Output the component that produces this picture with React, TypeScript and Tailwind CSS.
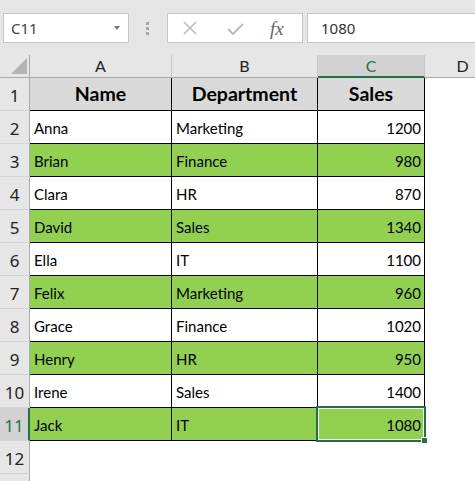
import React from 'react';

type Row = { name: string; dept: string; sales: number };

const rows: Row[] = [
  { name: 'Anna', dept: 'Marketing', sales: 1200 },
  { name: 'Brian', dept: 'Finance', sales: 980 },
  { name: 'Clara', dept: 'HR', sales: 870 },
  { name: 'David', dept: 'Sales', sales: 1340 },
  { name: 'Ella', dept: 'IT', sales: 1100 },
  { name: 'Felix', dept: 'Marketing', sales: 960 },
  { name: 'Grace', dept: 'Finance', sales: 1020 },
  { name: 'Henry', dept: 'HR', sales: 950 },
  { name: 'Irene', dept: 'Sales', sales: 1400 },
  { name: 'Jack', dept: 'IT', sales: 1080 },
];

const ui = { fontFamily: '"Noto Sans", "Open Sans", sans-serif' };
const cellFont = { fontFamily: 'Lato, "Noto Sans", sans-serif' };

function FormulaBar() {
  return (
    <div className="h-[55px] bg-[#e6e6e6] flex items-start pt-[13px]" style={ui}>
      <div className="ml-[3px] w-[126px] h-[30px] bg-white border border-[#c6c6c6] flex items-center pl-[7px] pr-[8px]">
        <span className="text-[15px] text-[#444] leading-none">C11</span>
        <span className="ml-auto w-0 h-0 border-l-[3.5px] border-r-[3.5px] border-t-[4px] border-l-transparent border-r-transparent border-t-[#777]" />
      </div>
      <div className="w-[38px] h-[30px] flex flex-col items-center justify-center gap-[2px] pr-[1px]">
        <span className="w-[3px] h-[3px] bg-[#a6a6a6]" />
        <span className="w-[3px] h-[3px] bg-[#a6a6a6]" />
        <span className="w-[3px] h-[3px] bg-[#a6a6a6]" />
      </div>
      <div className="w-[136px] h-[30px] bg-white border border-[#c6c6c6] flex items-center">
        <svg className="ml-[14px]" width="16" height="14" viewBox="0 0 16 14" fill="none">
          <path d="M2 1 L14 13 M14 1 L2 13" stroke="#bcbcbc" strokeWidth="1.6" />
        </svg>
        <svg className="ml-[29px] mt-[2px]" width="17" height="12" viewBox="0 0 17 12" fill="none">
          <path d="M1 6 L6 11 L16 1" stroke="#bcbcbc" strokeWidth="2" />
        </svg>
        <span
          className="ml-[26px] text-[19px] italic text-[#666] leading-none"
          style={{ fontFamily: '"Liberation Serif", serif' }}
        >
          fx
        </span>
      </div>
      <div className="ml-[4px] flex-1 h-[30px] bg-white border border-[#c6c6c6] border-r-0 flex items-center pl-[13px]">
        <span className="text-[15px] text-[#333] leading-none">1080</span>
      </div>
    </div>
  );
}

function ColHeader({ label, selected }: { label: string; selected?: boolean }) {
  return (
    <div
      className={
        'h-[23px] flex items-center justify-center text-[16px] border-r border-[#c8c8c8] ' +
        (selected
          ? 'bg-[#d2d2d2] text-[#217346] border-b-2 border-b-[#217346]'
          : 'bg-[#e6e6e6] text-[#222] border-b border-b-[#ababab]')
      }
      style={cellFont}
    >
      {label}
    </div>
  );
}

function RowHeader({ n, selected }: { n?: number; selected?: boolean }) {
  return (
    <div
      className={
        'h-[33px] flex items-end justify-center pb-[4px] text-[17px] leading-[20px] border-b border-[#d4d4d4] ' +
        (selected
          ? 'bg-[#d2d2d2] text-[#217346] border-r-2 border-r-[#217346]'
          : 'bg-[#e6e6e6] text-[#222] border-r border-r-[#ababab]')
      }
      style={ui}
    >
      {n}
    </div>
  );
}

function Cell({
  children,
  fill,
  right,
  bold,
  center,
  selected,
}: {
  children?: React.ReactNode;
  fill?: string;
  right?: boolean;
  bold?: boolean;
  center?: boolean;
  selected?: boolean;
}) {
  return (
    <div
      className={
        'relative h-[33px] flex items-end border-r border-b border-black text-black ' +
        (bold ? 'font-bold text-[19.5px] leading-[22px] pb-[5px] ' : 'text-[15px] leading-[20px] pb-[5px] ') +
        (right ? 'justify-end pr-[3px] ' : center ? 'justify-center ' : 'pl-[4px] ') +
        (fill ?? 'bg-white')
      }
      style={cellFont}
    >
      {children}
      {selected && (
        <div className="absolute -left-[2px] -top-[2px] w-[110px] h-[36px] border-2 border-[#217346] pointer-events-none">
          <div className="w-full h-full border border-white" />
          <div className="absolute -right-[4px] -bottom-[4px] w-[7px] h-[7px] bg-[#217346] border border-white" />
        </div>
      )}
    </div>
  );
}

export default function App() {
  return (
    <div className="w-[475px] h-[481px] overflow-hidden bg-white">
      <FormulaBar />
      <div className="grid grid-cols-[30px_142px_146px_107px_76px] w-[501px]">
        {/* corner + column headers */}
        <div className="h-[23px] bg-[#e6e6e6] border-r border-b border-[#ababab] flex items-end justify-end pr-[2px] pb-[3px]">
          <svg width="16" height="16" viewBox="0 0 16 16">
            <path d="M16 0 L16 16 L0 16 Z" fill="#b4b4b4" />
          </svg>
        </div>
        <ColHeader label="A" />
        <ColHeader label="B" />
        <ColHeader label="C" selected />
        <ColHeader label="D" />

        {/* header row */}
        <RowHeader n={1} />
        <Cell bold center fill="bg-[#d9d9d9]">Name</Cell>
        <Cell bold center fill="bg-[#d9d9d9]">Department</Cell>
        <Cell bold center fill="bg-[#d9d9d9]">Sales</Cell>
        <div className="h-[33px] bg-white" />

        {rows.map((r, i) => {
          const fill = i % 2 === 1 ? 'bg-[#92d050]' : 'bg-white';
          const last = i === rows.length - 1;
          return (
            <React.Fragment key={r.name}>
              <RowHeader n={i + 2} selected={last} />
              <Cell fill={fill}>{r.name}</Cell>
              <Cell fill={fill}>{r.dept}</Cell>
              <Cell fill={fill} right selected={last}>
                {r.sales}
              </Cell>
              <div className="h-[33px] bg-white" />
            </React.Fragment>
          );
        })}

        {/* row 12 and the clipped top of row 13 */}
        {[12, undefined].map((n, k) => (
          <React.Fragment key={k}>
            <RowHeader n={n} />
            <div className="h-[33px] bg-white" />
            <div className="h-[33px] bg-white" />
            <div className="h-[33px] bg-white" />
            <div className="h-[33px] bg-white" />
          </React.Fragment>
        ))}
      </div>
    </div>
  );
}
